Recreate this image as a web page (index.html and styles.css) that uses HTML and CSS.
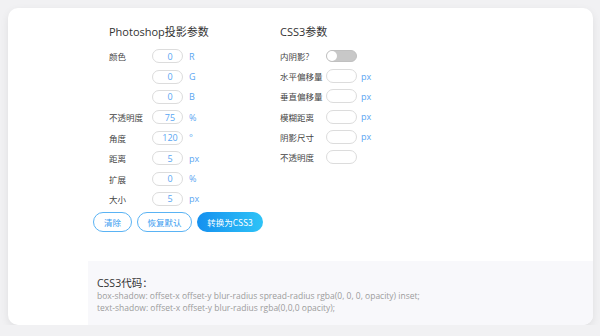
FILE: index.html
```html
<!DOCTYPE html>
<html lang="zh-CN">
<head>
  <meta charset="UTF-8" />
  <title>投影转换</title>
  <link rel="stylesheet" href="styles.css">
</head>
<body>
  <div class="card">
    <div class="panel">
      <div class="col col-ps">
        <h2 class="col-title">Photoshop投影参数</h2>
        <div class="row"><span class="label">颜色</span><input class="num" value="0"><span class="unit">R</span></div>
        <div class="row"><span class="label"></span><input class="num" value="0"><span class="unit">G</span></div>
        <div class="row"><span class="label"></span><input class="num" value="0"><span class="unit">B</span></div>
        <div class="row"><span class="label">不透明度</span><input class="num" value="75"><span class="unit">%</span></div>
        <div class="row"><span class="label">角度</span><input class="num" value="120"><span class="unit">°</span></div>
        <div class="row"><span class="label">距离</span><input class="num" value="5"><span class="unit">px</span></div>
        <div class="row"><span class="label">扩展</span><input class="num" value="0"><span class="unit">%</span></div>
        <div class="row"><span class="label">大小</span><input class="num" value="5"><span class="unit">px</span></div>
        <div class="actions">
          <button class="btn">清除</button>
          <button class="btn">恢复默认</button>
          <button class="btn btn-primary">转换为CSS3</button>
        </div>
      </div>

      <div class="col col-css">
        <h2 class="col-title">CSS3参数</h2>
        <div class="row"><span class="label">内阴影?</span><span class="switch"><span class="knob"></span></span></div>
        <div class="row"><span class="label">水平偏移量</span><input class="num"><span class="unit">px</span></div>
        <div class="row"><span class="label">垂直偏移量</span><input class="num"><span class="unit">px</span></div>
        <div class="row"><span class="label">模糊距离</span><input class="num"><span class="unit">px</span></div>
        <div class="row"><span class="label">阴影尺寸</span><input class="num"><span class="unit">px</span></div>
        <div class="row"><span class="label">不透明度</span><input class="num"></div>
      </div>
    </div>

    <div class="code">
      <div class="code-title">CSS3代码：</div>
      <div class="code-line">box-shadow: offset-x offset-y blur-radius spread-radius rgba(0, 0, 0, opacity) inset;</div>
      <div class="code-line">text-shadow: offset-x offset-y blur-radius rgba(0,0,0 opacity);</div>
    </div>
  </div>
</body>
</html>
```

FILE: styles.css
```css
body { margin: 0; background: #f1f1f3; font-family: "Open Sans", "Noto Sans CJK SC", sans-serif; }
.card { margin: 8px 7px 0 8px; height: 317px; background: #fff; border-radius: 10px; box-shadow: 0 3px 8px rgba(0,0,0,0.08); overflow: hidden; display: flex; flex-direction: column; }
.panel { display: flex; padding: 17px 0 0 85px; }
.col-ps { width: 187px; }
.col-title { margin: 0 0 7px 16px; font-size: 11px; line-height: 14px; font-weight: normal; color: #333; }
.col-css .col-title { margin-left: 0; }
.row { display: flex; align-items: center; height: 20.4px; margin-left: 16px; }
.col-css .row { margin-left: 0; height: 20.2px; }
.label { width: 43px; font-size: 8.5px; color: #444; }
.col-css .label { width: 46px; }
.num { box-sizing: border-box; width: 31px; height: 14px; padding: 0 0 0 5px; border: 1px solid #dcdcdc; border-radius: 8px; text-align: center; font: 9px "Open Sans", sans-serif; color: #5aa6f2; outline: none; }
.unit { margin-left: 6px; font-size: 9px; color: #5aa6f2; }
.col-css .unit { margin-left: 4px; }
.switch { position: relative; box-sizing: border-box; width: 31px; height: 12px; border-radius: 6px; background: #c8c8c8; border: 1px solid #c0c0c0; }
.knob { position: absolute; left: 0; top: 0; width: 10px; height: 10px; border-radius: 50%; background: #fff; }
.actions { display: flex; gap: 5px; margin-top: 3px; }
.btn { box-sizing: border-box; height: 20px; padding: 0; border: 1px solid #5ab3f4; border-radius: 10px; background: #fff; color: #3a9cf0; font: 8.5px "Noto Sans CJK SC", sans-serif; }
.btn:first-child { width: 39px; }
.btn:nth-child(2) { width: 55px; }
.btn-primary { width: 66px; border: none; background: linear-gradient(90deg, #1590ef, #2ec3f7); color: #fff; }
.code { margin: auto 0 0 80px; height: 64px; background: #f8f8fb; padding: 15px 0 0 9px; box-sizing: border-box; }
.code-title { font-size: 10.5px; line-height: 14px; color: #333; }
.code-line { font-size: 8.5px; line-height: 12px; color: #9c9c9c; }
```
